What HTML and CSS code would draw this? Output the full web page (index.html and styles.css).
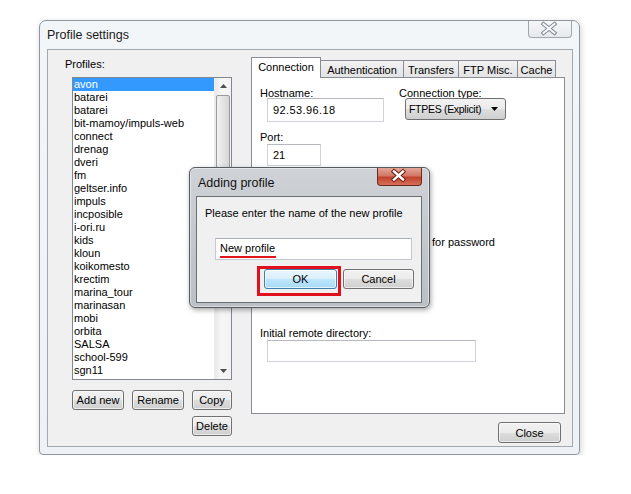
FILE: index.html
```html
<!DOCTYPE html>
<html>
<head>
<meta charset="utf-8">
<link rel="stylesheet" href="styles.css">
</head>
<body>
<div class="window">
  <div class="titlebar">
    <div class="title">Profile settings</div>
    <div class="wclose">
      <svg width="44" height="17" viewBox="0 0 44 17"><path d="M16.5 4 L27.5 13 M27.5 4 L16.5 13" stroke="#7d8791" stroke-width="4" stroke-linecap="square" fill="none"/><path d="M16.5 4 L27.5 13 M27.5 4 L16.5 13" stroke="#f7f8fa" stroke-width="2" stroke-linecap="square" fill="none"/></svg>
    </div>
  </div>
  <div class="client">
    <div class="leftcol">
      <div class="lbl">Profiles:</div>
      <div class="listbox">
        <div class="items">
          <div class="item sel">avon</div>
          <div class="item">batarei</div>
          <div class="item">batarei</div>
          <div class="item">bit-mamoy/impuls-web</div>
          <div class="item">connect</div>
          <div class="item">drenag</div>
          <div class="item">dveri</div>
          <div class="item">fm</div>
          <div class="item">geltser.info</div>
          <div class="item">impuls</div>
          <div class="item">incposible</div>
          <div class="item">i-ori.ru</div>
          <div class="item">kids</div>
          <div class="item">kloun</div>
          <div class="item">koikomesto</div>
          <div class="item">krectim</div>
          <div class="item">marina_tour</div>
          <div class="item">marinasan</div>
          <div class="item">mobi</div>
          <div class="item">orbita</div>
          <div class="item">SALSA</div>
          <div class="item">school-599</div>
          <div class="item">sgn11</div>
        </div>
        <div class="vscroll">
          <div class="arrow"><svg width="7" height="4" viewBox="0 0 7 4"><path d="M0 4 L3.5 0 L7 4 Z" fill="#4d4d4d"/></svg></div>
          <div class="thumb"></div>
          <div class="track"></div>
          <div class="arrow"><svg width="7" height="4" viewBox="0 0 7 4"><path d="M0 0 L3.5 4 L7 0 Z" fill="#4d4d4d"/></svg></div>
        </div>
      </div>
      <div class="btnrow">
        <div class="btn w52">Add new</div>
        <div class="btn w52">Rename</div>
        <div class="btn w40">Copy</div>
      </div>
      <div class="btnrow2">
        <div class="btn w40">Delete</div>
      </div>
    </div>
    <div class="rightcol">
      <div class="tabs">
        <div class="tab active t1">Connection</div>
        <div class="tab t2">Authentication</div>
        <div class="tab t3">Transfers</div>
        <div class="tab t4">FTP Misc.</div>
        <div class="tab t5">Cache</div>
      </div>
      <div class="panel">
        <div class="row">
          <div class="group g1">
            <div class="flbl">Hostname:</div>
            <div class="input host">92.53.96.18</div>
          </div>
          <div class="group">
            <div class="flbl">Connection type:</div>
            <div class="select"><span>FTPES (Explicit)</span><svg width="7" height="4" viewBox="0 0 7 4"><path d="M0 0 L3.5 4 L7 0 Z" fill="#000"/></svg></div>
          </div>
        </div>
        <div class="flbl port">Port:</div>
        <div class="input portin">21</div>
        <div class="middle">
          <div class="askpw">for password</div>
        </div>
        <div class="flbl">Initial remote directory:</div>
        <div class="input dir"></div>
      </div>
      <div class="btn closebtn">Close</div>
    </div>
  </div>
</div>

<div class="dialog">
  <div class="dtitlebar">
    <div class="dtitle">Adding profile</div>
    <div class="dclose">
      <svg width="45" height="18" viewBox="0 0 45 18"><path d="M18 4.5 L27 12.5 M27 4.5 L18 12.5" stroke="#6e1d12" stroke-width="4.4" stroke-linecap="square" fill="none"/><path d="M18 4.5 L27 12.5 M27 4.5 L18 12.5" stroke="#ffffff" stroke-width="2.4" stroke-linecap="square" fill="none"/></svg>
    </div>
  </div>
  <div class="dclient">
    <div class="dtext">Please enter the name of the new profile</div>
    <div class="input dinput"><span class="uline">New profile</span></div>
    <div class="dbtns">
      <div class="okwrap"><div class="btn ok">OK</div><div class="redbox"></div></div>
      <div class="btn cancel">Cancel</div>
    </div>
  </div>
</div>
</body>
</html>
```

FILE: styles.css
```css
html, body {
  margin: 0;
  padding: 0;
  background: #ffffff;
  font-family: "Liberation Sans", Arial, sans-serif;
  font-size: 11px;
  color: #000;
}

.window {
  margin: 20px 0 0 39px;
  width: 541px;
  height: 435px;
  box-sizing: border-box;
  border: 1px solid #8f969d;
  border-radius: 7px 7px 4px 4px;
  background: linear-gradient(#f3f6f9, #eef1f5);
  padding: 0 6px 7px 7px;
  display: flex;
  flex-direction: column;
  box-shadow: 1px 2px 6px rgba(0, 0, 0, 0.18);
}

.titlebar {
  height: 28px;
  display: flex;
  justify-content: space-between;
  align-items: flex-start;
  flex: none;
}

.title {
  font-size: 12.5px;
  line-height: 14px;
  padding-top: 7px;
  color: #1a1a1a;
}

.wclose {
  width: 44px;
  height: 17px;
  margin-right: 1px;
  box-sizing: border-box;
  border: 1px solid #9ea6ae;
  border-top: none;
  border-radius: 0 0 4px 4px;
  background: linear-gradient(#f6f7f9, #e6e9ed);
  display: flex;
  align-items: center;
  justify-content: center;
}
.wclose svg { display: block; margin-left: -2px; margin-top: -1px; }

.client {
  flex: 1;
  border: 1px solid #a3a8ae;
  background: #f0f0f0;
  display: flex;
  padding: 7px 0 0 17px;
}

.leftcol {
  width: 167px;
  display: flex;
  flex-direction: column;
  flex: none;
}

.lbl {
  line-height: 14px;
  height: 14px;
}

.listbox {
  margin: 6px 0 0 7px;
  width: 160px;
  height: 303px;
  box-sizing: border-box;
  border: 1px solid #828790;
  background: #fff;
  display: flex;
}

.items {
  flex: 1;
  overflow: hidden;
}

.item {
  height: 13px;
  line-height: 13px;
  padding-left: 1px;
  white-space: nowrap;
}
.item.sel {
  background: #3399ff;
  color: #fff;
}

.vscroll {
  width: 17px;
  display: flex;
  flex-direction: column;
  background: linear-gradient(90deg, #e9e9e9, #f6f6f6 40%, #f3f3f3);
  border-left: 1px solid #ededed;
  box-sizing: border-box;
}
.arrow {
  height: 16px;
  display: flex;
  align-items: center;
  justify-content: center;
  flex: none;
}
.arrow svg { display: block; }
.thumb {
  height: 140px;
  margin: 1px 1px 0 1px;
  border: 1px solid #9b9b9b;
  border-radius: 2px;
  background: linear-gradient(90deg, #f2f2f2, #e4e4e4 50%, #d6d6d6);
  flex: none;
}
.track { flex: 1; }

.btn {
  height: 20px;
  box-sizing: border-box;
  border: 1px solid #707070;
  border-radius: 3px;
  background: linear-gradient(#f2f2f2 0%, #ebebeb 50%, #dddddd 51%, #cfcfcf 100%);
  display: flex;
  align-items: center;
  justify-content: center;
  line-height: 12px;
  box-shadow: inset 0 0 0 1px rgba(255, 255, 255, 0.6);
}
.w52 { width: 52px; }
.w40 { width: 40px; }

.btnrow {
  display: flex;
  gap: 8px;
  margin: 10px 0 0 7px;
}
.btnrow2 {
  display: flex;
  justify-content: flex-end;
  margin-top: 6px;
}

.rightcol {
  margin-left: 19px;
  width: 314px;
  display: flex;
  flex-direction: column;
  flex: none;
}

.tabs {
  height: 20px;
  display: flex;
  align-items: flex-end;
  position: relative;
  z-index: 1;
}
.tab {
  height: 17px;
  box-sizing: border-box;
  border: 1px solid #898c95;
  border-bottom: none;
  background: linear-gradient(#f2f2f2, #e3e3e3);
  display: flex;
  align-items: center;
  justify-content: center;
  margin-left: -1px;
  line-height: 12px;
  padding-top: 1px;
}
.tab.active {
  height: 21px;
  margin-bottom: -1px;
  background: #fff;
  margin-left: 0;
  padding-top: 0;
  padding-bottom: 2px;
}
.t1 { width: 70px; }
.t2 { width: 84px; }
.t3 { width: 56px; }
.t4 { width: 60px; }
.t5 { width: 39px; }

.panel {
  height: 337px;
  box-sizing: border-box;
  border: 1px solid #898c95;
  background: #fff;
  padding: 9px 0 0 8px;
  display: flex;
  flex-direction: column;
}

.row { display: flex; }
.group { display: flex; flex-direction: column; }
.g1 { width: 139px; }

.flbl {
  line-height: 12px;
  height: 12px;
}

.input {
  box-sizing: border-box;
  border: 1px solid #d0d3d8;
  border-top-color: #b5b8be;
  background: #fff;
  height: 22px;
  display: flex;
  align-items: center;
  padding-left: 5px;
}
.host {
  margin: -1px 0 0 7px;
  width: 117px;
  height: 24px;
  letter-spacing: 0.4px;
}
.select {
  margin: -1px 0 0 6px;
  width: 101px;
  height: 22px;
  box-sizing: border-box;
  border: 1px solid #707070;
  border-radius: 3px;
  background: linear-gradient(#f2f2f2 0%, #ebebeb 50%, #dddddd 51%, #cfcfcf 100%);
  display: flex;
  align-items: center;
  justify-content: space-between;
  padding: 0 7px 0 3px;
  font-size: 10.5px;
  letter-spacing: -0.3px;
  white-space: nowrap;
}
.select svg { display: block; flex: none; }

.port { margin-top: 9px; }
.portin {
  margin: 1px 0 0 7px;
  width: 54px;
}

.middle {
  height: 161px;
  flex: none;
}
.askpw {
  margin: 70px 0 0 172px;
  line-height: 12px;
}

.dir {
  margin: 1px 0 0 7px;
  width: 209px;
}

.closebtn {
  margin: 8px 4px 0 0;
  align-self: flex-end;
  width: 63px;
  height: 21px;
}

/* Dialog overlay */
.dialog {
  position: absolute;
  left: 189px;
  top: 167px;
  width: 241px;
  height: 141px;
  box-sizing: border-box;
  border: 1px solid #575c61;
  border-radius: 6px;
  background: linear-gradient(#cfd3d7, #c2c6ca 60%, #bcc0c4);
  padding: 0 7px 4px 6px;
  display: flex;
  flex-direction: column;
  box-shadow: 1px 2px 5px rgba(0, 0, 0, 0.35), inset 0 0 0 1px rgba(255, 255, 255, 0.45);
}
.dtitlebar {
  height: 28px;
  display: flex;
  justify-content: space-between;
  align-items: flex-start;
  flex: none;
}
.dtitle {
  font-size: 12.5px;
  line-height: 14px;
  padding: 8px 0 0 2px;
  color: #111;
}
.dclose {
  width: 45px;
  height: 18px;
  box-sizing: border-box;
  border: 1px solid #6a2a22;
  border-top: none;
  border-radius: 0 0 4px 4px;
  background: linear-gradient(#e3a595 0%, #d47866 45%, #c2422c 55%, #d8705a 100%);
  display: flex;
  align-items: center;
  justify-content: center;
}
.dclose svg { display: block; margin-left: -2px; margin-top: -1px; }

.dclient {
  flex: 1;
  border: 1px solid #6b7075;
  background: #f0f0f0;
  padding: 9px 7px 0 8px;
  display: flex;
  flex-direction: column;
}
.dtext {
  line-height: 14px;
  height: 14px;
  white-space: nowrap;
}
.dinput {
  margin: 18px 0 0 10px;
  width: 197px;
  height: 22px;
  border-color: #c5cad1;
  border-top-color: #a9b0b8;
  padding-left: 4px;
}
.uline {
  display: inline-block;
  line-height: 12px;
  padding-bottom: 2px;
  border-bottom: 2px solid #e1141e;
  margin-top: 2px;
  padding-right: 1px;
}
.dbtns {
  display: flex;
  justify-content: flex-end;
  gap: 6px;
  margin-top: 9px;
}
.okwrap {
  position: relative;
}
.ok {
  width: 73px;
  border-color: #3c7fb1;
  background: linear-gradient(#eaf6fd 0%, #d9f0fc 50%, #bee6fd 51%, #a7d9f5 100%);
  box-shadow: inset 0 0 0 1px rgba(255, 255, 255, 0.7);
}
.redbox {
  position: absolute;
  left: -7px;
  top: -3px;
  width: 84px;
  height: 30px;
  box-sizing: border-box;
  border: 3px solid #e0101c;
}
.cancel { width: 71px; }
```
